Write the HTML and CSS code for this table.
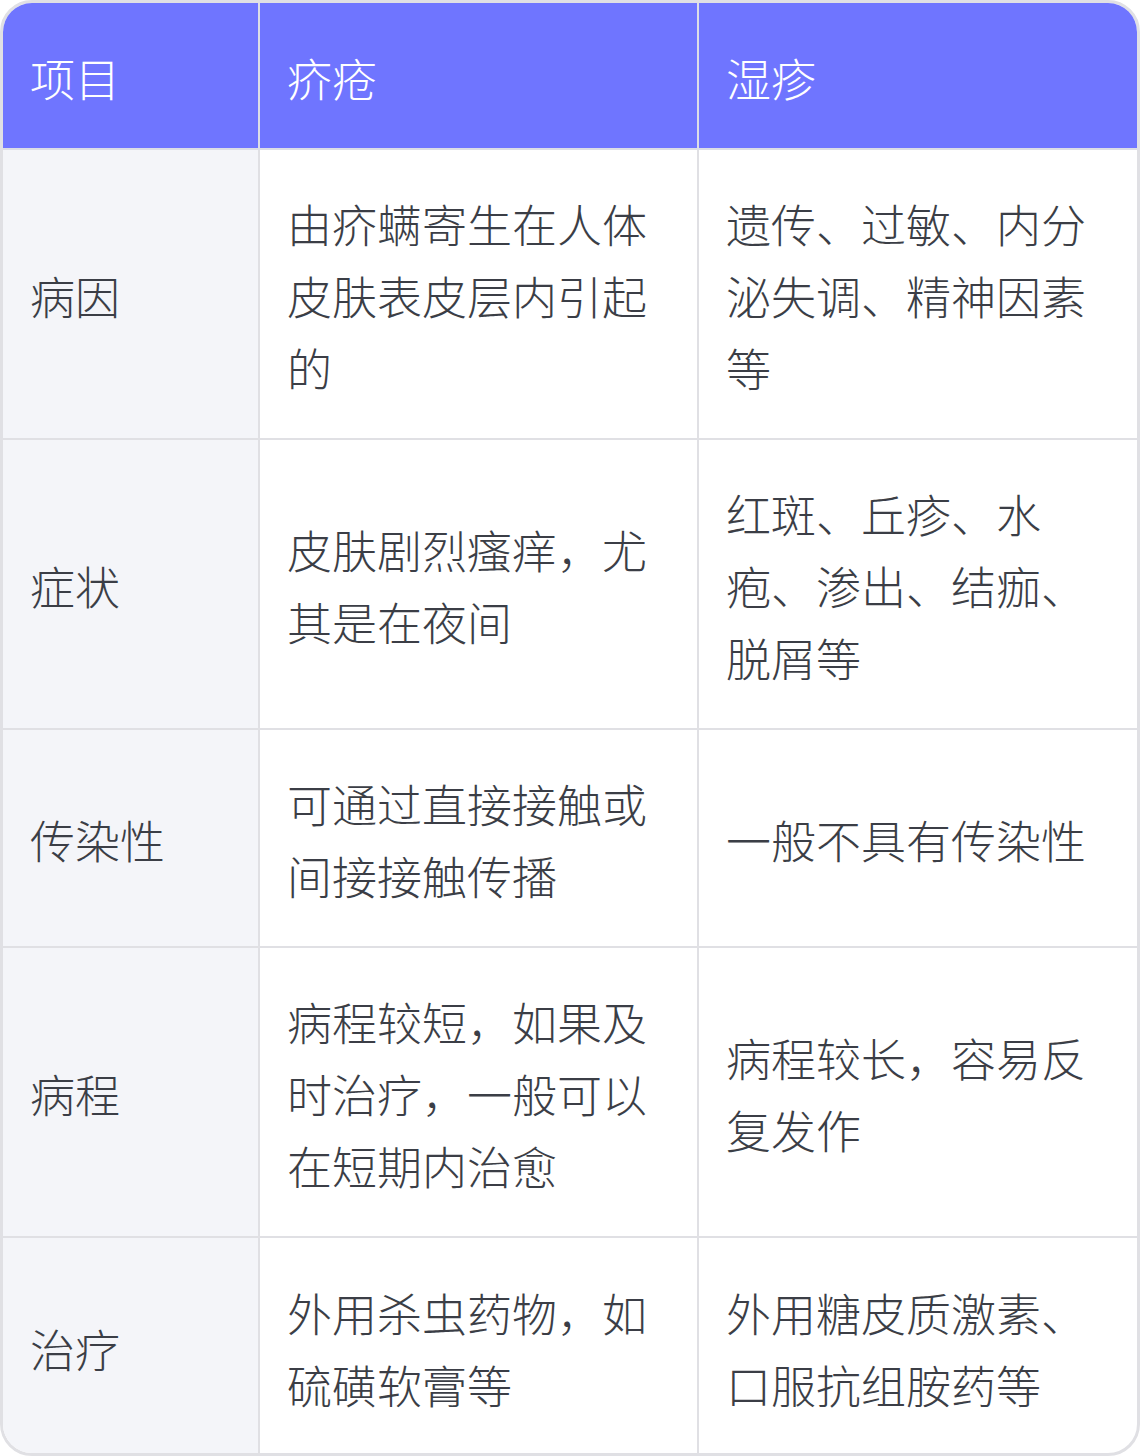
FILE: index.html
```html
<!DOCTYPE html>
<html lang="zh-CN">
<head>
<meta charset="utf-8">
<link rel="stylesheet" href="styles.css">
</head>
<body>
<div class="wrap">
<table class="cmp">
<thead>
<tr><th class="c1">项目</th><th>疥疮</th><th>湿疹</th></tr>
</thead>
<tbody>
<tr class="tall"><td class="c1">病因</td><td>由疥螨寄生在人体皮肤表皮层内引起的</td><td>遗传、过敏、内分泌失调、精神因素等</td></tr>
<tr class="tall"><td class="c1">症状</td><td>皮肤剧烈瘙痒，尤其是在夜间</td><td>红斑、丘疹、水疱、渗出、结痂、脱屑等</td></tr>
<tr><td class="c1">传染性</td><td>可通过直接接触或间接接触传播</td><td>一般不具有传染性</td></tr>
<tr class="tall"><td class="c1">病程</td><td>病程较短，如果及时治疗，一般可以在短期内治愈</td><td>病程较长，容易反复发作</td></tr>
<tr><td class="c1">治疗</td><td>外用杀虫药物，如硫磺软膏等</td><td>外用糖皮质激素、口服抗组胺药等</td></tr>
</tbody>
</table>
</div>
</body>
</html>
```
FILE: styles.css
```css
html, body {
  margin: 0;
  padding: 0;
  background: #ffffff;
}
.wrap {
  width: 1140px;
  height: 1456px;
  box-sizing: border-box;
  border: 3px solid #e0e0e4;
  border-radius: 32px;
  overflow: hidden;
}
.cmp {
  width: 100%;
  height: 100%;
  border-collapse: collapse;
  table-layout: fixed;
  font-family: "Noto Sans CJK SC", "Noto Sans", sans-serif;
  font-weight: 300;
  font-size: 45px;
  line-height: 72px;
  color: #3b3e46;
}
.cmp th, .cmp td {
  border: 2px solid #e0e0e4;
  padding: 4px 26px 0 27px;
  text-align: left;
  vertical-align: middle;
  font-weight: 300;
}
.cmp tr:first-child th { border-top: none; }
.cmp tr:last-child td { border-bottom: none; }
.cmp th:first-child, .cmp td:first-child { border-left: none; }
.cmp th:last-child, .cmp td:last-child { border-right: none; }
.cmp thead tr { height: 146px; }
.cmp thead th {
  background: #6f75ff;
  color: #ffffff;
  border-color: #dcdde6;
}
.cmp .c1 {
  width: 256px;
  box-sizing: border-box;
}
.cmp td.c1 {
  background: #f4f5f9;
}
.cmp tbody tr { height: 218px; }
.cmp tbody tr.tall { height: 290px; }
```
